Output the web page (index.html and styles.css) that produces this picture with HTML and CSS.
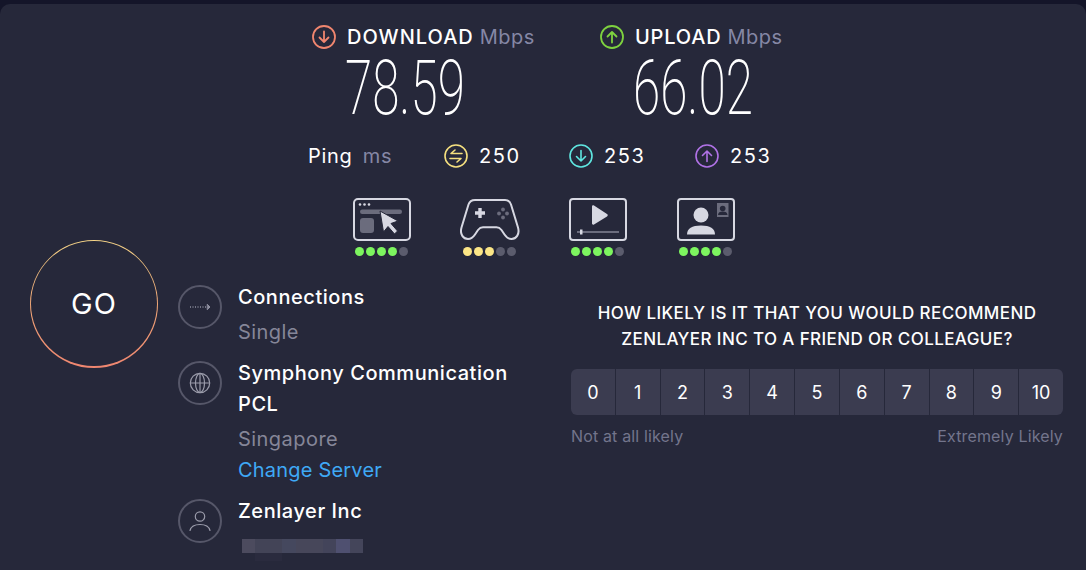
FILE: index.html
```html
<!DOCTYPE html>
<html lang="en">
<head>
<meta charset="utf-8">
<title>Speedtest result</title>
<link rel="stylesheet" href="styles.css">
</head>
<body>
<main class="panel">
  <section class="go-col">
    <div class="go-ring"><div class="go-inner">GO</div></div>
  </section>
  <section class="content">
    <div class="speeds">
      <div class="speed">
        <div class="speed-head">
          <svg class="ic24" viewBox="0 0 24 24" fill="none" stroke="#f0866f" stroke-width="1.8" stroke-linecap="round" stroke-linejoin="round"><circle cx="12" cy="12" r="11"/><path d="M12 6.500v10.500M7.500 12.500L12 17l4.500-4.500"/></svg>
          <span class="speed-name">DOWNLOAD</span><span class="unit">Mbps</span>
        </div>
        <div class="speed-value"><span>78.59</span></div>
      </div>
      <div class="speed">
        <div class="speed-head">
          <svg class="ic24" viewBox="0 0 24 24" fill="none" stroke="#7ed23f" stroke-width="1.8" stroke-linecap="round" stroke-linejoin="round"><circle cx="12" cy="12" r="11"/><path d="M12 17.500V7M7.500 11.500L12 7l4.500 4.500"/></svg>
          <span class="speed-name upload">UPLOAD</span><span class="unit">Mbps</span>
        </div>
        <div class="speed-value"><span>66.02</span></div>
      </div>
    </div>

    <div class="ping">
      <div class="ping-label">Ping <span class="ping-unit">ms</span></div>
      <div class="ping-item ping-a">
        <svg class="ic24" viewBox="0 0 24 24" fill="none" stroke="#f5e07f" stroke-width="1.6" stroke-linecap="round" stroke-linejoin="round"><circle cx="12" cy="12" r="11"/><path d="M18 9.500H7l4-3.500M6 14.500h11l-4 3.500"/></svg>
        <span>250</span>
      </div>
      <div class="ping-item ping-b">
        <svg class="ic24" viewBox="0 0 24 24" fill="none" stroke="#5fe6e0" stroke-width="1.6" stroke-linecap="round" stroke-linejoin="round"><circle cx="12" cy="12" r="11"/><path d="M12 6.500V17M7.500 12.500L12 17l4.500-4.500"/></svg>
        <span>253</span>
      </div>
      <div class="ping-item">
        <svg class="ic24" viewBox="0 0 24 24" fill="none" stroke="#b072e6" stroke-width="1.6" stroke-linecap="round" stroke-linejoin="round"><circle cx="12" cy="12" r="11"/><path d="M12 17.500V7M7.500 11.500L12 7l4.500 4.500"/></svg>
        <span>253</span>
      </div>
    </div>

    <div class="quality">
      <div class="q">
        <svg class="q-icon" viewBox="0 0 60 44" fill="none">
          <rect x="2" y="2" width="56" height="41" rx="4" stroke="#d7d8e2" stroke-width="2"/>
          <circle cx="8" cy="7.500" r="1.300" fill="#d7d8e2"/><circle cx="12.500" cy="7.500" r="1.300" fill="#d7d8e2"/><circle cx="17" cy="7.500" r="1.300" fill="#d7d8e2"/>
          <rect x="8" y="12.500" width="42" height="4.500" rx="2.200" fill="#6b6c7d"/>
          <rect x="8" y="21" width="14" height="15" rx="3" fill="#6b6c7d"/>
          <path d="M28 14l18 10-7 2.500 6.500 7.500-3 3-6.500-7.500-4.500 5.500z" fill="#d7d8e2" stroke="#26283a" stroke-width="1"/>
        </svg>
        <div class="dots"><i class="on-g"></i><i class="on-g"></i><i class="on-g"></i><i class="on-g"></i><i></i></div>
      </div>
      <div class="q">
        <svg class="q-icon" viewBox="0 0 60 44" fill="none">
          <path d="M15 3h30c3 0 5 1.500 6 4.500l7 23c2 7-2 11.500-6.500 11.500-3 0-5-1.500-7-4.500l-3-4.500c-1.500-2-3-2.800-5-2.800H23c-2 0-3.500 .8-5 2.800l-3 4.500c-2 3-4 4.500-7 4.500C3.500 42-.5 37.500 1.500 30.500l7-23C9.500 4.500 12 3 15 3z" stroke="#d7d8e2" stroke-width="2"/>
          <path d="M20 11v10M15 16h10" stroke="#d7d8e2" stroke-width="3.400"/>
          <circle cx="43" cy="12.500" r="1.900" fill="#6b6c7d"/><circle cx="43" cy="20.500" r="1.900" fill="#6b6c7d"/><circle cx="39" cy="16.500" r="1.900" fill="#6b6c7d"/><circle cx="47" cy="16.500" r="1.900" fill="#6b6c7d"/>
        </svg>
        <div class="dots"><i class="on-y"></i><i class="on-y"></i><i class="on-y"></i><i></i><i></i></div>
      </div>
      <div class="q">
        <svg class="q-icon" viewBox="0 0 60 44" fill="none">
          <rect x="2" y="2" width="56" height="41" rx="3" stroke="#d7d8e2" stroke-width="2"/>
          <path d="M24 9.500c0-1 1-1.500 2-1l13 8.500c1 .6 1 1.800 0 2.400L26 27.500c-1 .5-2 0-2-1z" fill="#d7d8e2"/>
          <rect x="9" y="34" width="42" height="2" fill="#6b6c7d"/>
          <rect x="12" y="32.500" width="2.500" height="5" fill="#d7d8e2"/>
        </svg>
        <div class="dots"><i class="on-g"></i><i class="on-g"></i><i class="on-g"></i><i class="on-g"></i><i></i></div>
      </div>
      <div class="q">
        <svg class="q-icon" viewBox="0 0 60 44" fill="none">
          <rect x="2" y="2" width="56" height="41" rx="3" stroke="#d7d8e2" stroke-width="2"/>
          <circle cx="25" cy="18" r="7.500" fill="#d7d8e2"/>
          <path d="M11 37.500c0-6 5-9 14-9s14 3 14 9z" fill="#d7d8e2"/>
          <rect x="41" y="6" width="11.500" height="14" fill="#6b6c7d"/>
          <circle cx="46.700" cy="11.500" r="2.800" fill="#26283a"/>
          <path d="M42 18c0-2.500 2-3.500 4.700-3.500s4.800 1 4.800 3.500z" fill="#26283a"/>
        </svg>
        <div class="dots"><i class="on-g"></i><i class="on-g"></i><i class="on-g"></i><i class="on-g"></i><i></i></div>
      </div>
    </div>

    <div class="details">
      <div class="servers">
        <div class="server">
          <div class="round-icon">
            <svg viewBox="0 0 24 24" fill="none" stroke="#8d8e9e" stroke-linecap="round" stroke-linejoin="round"><path d="M2 12h17" stroke-width="1.300" stroke-dasharray="1 1.500" stroke-linecap="butt"/><path d="M19.500 9.500L22 12l-2.500 2.500z" fill="#8d8e9e" stroke-width="1"/></svg>
          </div>
          <div class="server-text">
            <div class="title">Connections</div>
            <div class="sub">Single</div>
          </div>
        </div>
        <div class="server">
          <div class="round-icon">
            <svg viewBox="0 0 24 24" fill="none" stroke="#9b9cab" stroke-width="1.200"><circle cx="12" cy="12" r="9.700"/><ellipse cx="12" cy="12" rx="4.500" ry="9.700"/><path d="M2.300 12h19.400M12 2.300v19.400"/></svg>
          </div>
          <div class="server-text">
            <div class="title">Symphony Communication PCL</div>
            <div class="sub">Singapore</div>
            <a class="change" href="#">Change Server</a>
          </div>
        </div>
        <div class="server">
          <div class="round-icon">
            <svg viewBox="0 0 24 24" fill="none" stroke="#9b9cab" stroke-width="1.200" stroke-linecap="round"><circle cx="12" cy="7.500" r="4.700"/><path d="M2 21.500c1-4 5-6 10-6s9 2 10 6"/></svg>
          </div>
          <div class="server-text">
            <div class="title">Zenlayer Inc</div>
            <div class="blurred" role="img" aria-label="Obscured address"></div>
          </div>
        </div>
      </div>

      <div class="survey">
        <h2 class="question">HOW LIKELY IS IT THAT YOU WOULD RECOMMEND ZENLAYER INC TO A FRIEND OR COLLEAGUE?</h2>
        <div class="scale">
          <button>0</button><button>1</button><button>2</button><button>3</button><button>4</button><button>5</button><button>6</button><button>7</button><button>8</button><button>9</button><button>10</button>
        </div>
        <div class="scale-labels"><span>Not at all likely</span><span>Extremely Likely</span></div>
      </div>
    </div>
  </section>
</main>
</body>
</html>
```

FILE: styles.css
```css
* { box-sizing: border-box; }
html, body { margin: 0; height: 100%; overflow: hidden; }
body {
  background: #141529;
  font-family: Inter, "Noto Sans", sans-serif;
  color: #fff;
  width: 1086px;
  height: 570px;
}
.panel {
  margin-top: 4px;
  height: 566px;
  background: #26283a;
  border-radius: 10px 10px 0 0;
  display: flex;
}
.go-col { width: 178px; padding: 235.500px 0 0 30px; flex: none; }
.go-ring {
  width: 128px; height: 128px; border-radius: 50%;
  padding: 1.200px;
  background: linear-gradient(180deg, #f7d688 0%, #f2a878 50%, #ef8670 100%);
}
.go-inner {
  width: 100%; height: 100%; border-radius: 50%;
  background: #26283a;
  display: flex; align-items: center; justify-content: center;
  font-size: 29px; font-weight: 400; letter-spacing: 1.200px;
}
.content { flex: 1; min-width: 0; }
.ic24 { width: 24px; height: 24px; flex: none; }

.speeds { display: flex; padding: 21px 0 0 134px; }
.speed { width: 288px; }
.speed-head { display: flex; align-items: center; height: 24px; }
.speed-name { margin-left: 11px; font-size: 20px; font-weight: 500; letter-spacing: 1px; }
.speed-name.upload { letter-spacing: .8px; }
.unit { margin-left: 6px; font-size: 20px; color: #8587a5; letter-spacing: .5px; }
.speed-value { height: 68px; margin-top: 5px; padding-left: 33px; line-height: 68px; }
.speed-value span {
  display: inline-block;
  font-family: Roboto, sans-serif;
  font-weight: 200;
  font-size: 76px;
  transform: scaleX(.65);
  transform-origin: 0 50%;
}

.ping { display: flex; align-items: center; padding: 19px 0 0 130px; height: 49px; font-size: 20px; }
.ping-label { width: 136px; letter-spacing: .7px; }
.ping-unit { color: #8587a5; margin-left: 4px; }
.ping-item { display: flex; align-items: center; gap: 11px; letter-spacing: 1.600px; width: 125px; }
.ping-b { width: 126px; }

.quality { display: flex; padding: 26px 0 0 174px; height: 111px; }
.q { width: 108px; display: flex; flex-direction: column; align-items: flex-start; }
.q-icon { width: 60px; height: 44px; display: block; }
.dots { display: flex; gap: 2px; margin: 6px 0 0 3px; }
.dots i { width: 9px; height: 9px; border-radius: 50%; background: #5b5c6d; display: block; }
.dots .on-g { background: #7df55f; }
.dots .on-y { background: #fce686; }

.details { display: flex; }
.servers { width: 393px; flex: none; }
.server { display: flex; margin-bottom: 10px; }
.round-icon {
  width: 44px; height: 44px; border-radius: 50%; flex: none;
  border: 2px solid #565769;
  margin-top: 3px;
  display: flex; align-items: center; justify-content: center;
}
.round-icon svg { width: 24px; height: 24px; }
.server-text { margin-left: 16px; width: 290px; }
.title { font-size: 20px; line-height: 31px; font-weight: 500; letter-spacing: .55px; }
.sub { font-size: 20px; line-height: 31px; margin-top: 4px; color: #858698; letter-spacing: .45px; }
.change { display: block; font-size: 20px; line-height: 31px; color: #3fa9f5; text-decoration: none; letter-spacing: .2px; }
.blurred {
  margin-top: 12px; margin-left: 4px;
  width: 121px; height: 22px;
  background:
    linear-gradient(90deg, #4c4b5e 0 13px, #434457 13px 40px, #45485e 40px 54px, #47475a 54px 81px, #43445a 81px 94px, #4f5070 94px 108px, #44455a 108px 121px) top / 100% 14px no-repeat,
    linear-gradient(90deg, #26283a 0 13px, #2a2b3e 13px 40px, #26283a 40px 121px) bottom / 100% 8px no-repeat;
}

.survey { width: 492px; flex: none; padding-top: 18px; }
.question { margin: 0; font-size: 17px; line-height: 26px; font-weight: 500; text-align: center; letter-spacing: .4px; }
.scale {
  display: flex; margin-top: 17px; height: 46px;
  border-radius: 6px; overflow: hidden; gap: 1px;
}
.scale button {
  flex: 1; border: 0; padding: 0; background: #3b3c50; color: #fff;
  font: 400 18px Inter, sans-serif;
}
.scale-labels {
  display: flex; justify-content: space-between;
  margin-top: 11px; font-size: 16px; line-height: 20px; color: #73758c; letter-spacing: .15px;
}
```
